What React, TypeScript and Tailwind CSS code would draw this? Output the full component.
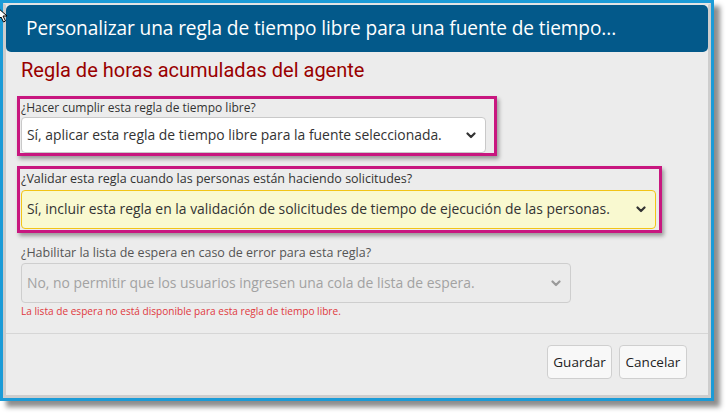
import React from 'react';

const Chevron: React.FC<{ className?: string }> = ({ className }) => (
  <svg width="10" height="7" viewBox="0 0 10 7" fill="none" stroke="currentColor" strokeWidth="2.2" strokeLinecap="round" strokeLinejoin="round" className={className}>
    <path d="M1.5 1.5 5 5l3.5-3.5" />
  </svg>
);

interface FakeSelectProps {
  value: string;
  className: string;
  chevronClass?: string;
}

const FakeSelect: React.FC<FakeSelectProps> = ({ value, className, chevronClass = 'text-[#333]' }) => (
  <div className={`flex items-center justify-between rounded-[4px] border pl-[5px] pr-[9px] text-[13.9px] ${className}`}>
    <span className="whitespace-nowrap">{value}</span>
    <Chevron className={chevronClass} />
  </div>
);

const App: React.FC = () => {
  return <div className="relative w-[727px] h-[415px] bg-white overflow-hidden" style={{ fontFamily: '"Open Sans", "Noto Sans", sans-serif' }}>
      <div className="w-[714px] h-[401px] border-[3px] border-[#1b9bd7] shadow-[6px_6px_5px_rgba(0,0,0,0.45)] bg-[#ececec]">
        <div className="h-full flex flex-col border-[3px] border-t-2 border-[#cdcdcd] border-t-[#e4e4e4]">
          {/* title bar */}
          <div className="h-[47px] shrink-0 rounded-[5px] bg-[#03598a] flex items-center pl-[20px]">
            <h1 className="text-white text-[19.1px] leading-none whitespace-nowrap tracking-[-0.1px]">
              Personalizar una regla de tiempo libre para una fuente de tiempo...
            </h1>
          </div>

          <div className="pl-[11px] pr-[21px]">
            <h2 className="mt-[6px] ml-[4px] text-[20px] leading-[24px] text-[#990000] whitespace-nowrap" style={{ fontFamily: 'Roboto, "Open Sans", sans-serif' }}>
              Regla de horas acumuladas del agente
            </h2>

            {/* enforce rule */}
            <div className="mt-[14px] w-[480px] h-[60px] border-[3px] border-[#c8177f] shadow-[2px_3px_4px_rgba(0,0,0,0.35)] pt-px pl-px">
              <label className="block text-[12px] leading-[16px] text-[#333] whitespace-nowrap">
                ¿Hacer cumplir esta regla de tiempo libre?
              </label>
              <FakeSelect value="Sí, aplicar esta regla de tiempo libre para la fuente seleccionada." className="mt-px w-[465px] h-[36px] bg-white border-[#c9c9c9] text-[#333]" />
            </div>

            {/* validate rule */}
            <div className="mt-[10px] w-[645px] h-[67px] border-[3px] border-[#c8177f] shadow-[2px_3px_4px_rgba(0,0,0,0.35)] pt-[2px] pl-px">
              <label className="block text-[12.5px] leading-[16px] text-[#333] whitespace-nowrap">
                ¿Validar esta regla cuando las personas están haciendo solicitudes?
              </label>
              <FakeSelect value="Sí, incluir esta regla en la validación de solicitudes de tiempo de ejecución de las personas." className="mt-[3px] w-[635px] h-[39px] bg-[#f9f9d0] border-[#f2c417] text-[#333]" />
            </div>

            {/* waitlist */}
            <div className="mt-[12px] pl-[4px]">
              <label className="block text-[12.5px] leading-[16px] text-[#555] whitespace-nowrap">
                ¿Habilitar la lista de espera en caso de error para esta regla?
              </label>
              <FakeSelect value="No, no permitir que los usuarios ingresen una cola de lista de espera." className="mt-[2px] w-[550px] h-[40px] bg-[#ebebeb] border-[#cecece] text-[#a2a2a2]" chevronClass="text-[#9a9a9a]" />
              <p className="mt-px text-[10.1px] leading-[14px] text-[#e0393e] whitespace-nowrap">
                La lista de espera no está disponible para esta regla de tiempo libre.
              </p>
            </div>
          </div>

          <div className="mt-[15px] h-px bg-[#d6d6d6]" />

          {/* footer */}
          <div className="mt-[11px] flex justify-end gap-[7px] pr-[21px]">
            <button className="w-[65px] h-[34px] rounded-[4px] border border-[#cfcfcf] bg-[#f8f8f8] text-[13.5px] text-[#222]">
              Guardar
            </button>
            <button className="w-[68px] h-[34px] rounded-[4px] border border-[#cfcfcf] bg-[#f8f8f8] text-[13.5px] text-[#222]">
              Cancelar
            </button>
          </div>
        </div>
      </div>

      {/* mouse pointer */}
      <svg width="10" height="16" viewBox="0 0 10 16" className="absolute left-[-3px] top-[7px]">
        <path d="M1 1v12l3-3 2.5 5 2-1-2.5-5H10Z" fill="white" stroke="black" strokeWidth="1" strokeLinejoin="round" />
      </svg>
    </div>;
};

export default App;
